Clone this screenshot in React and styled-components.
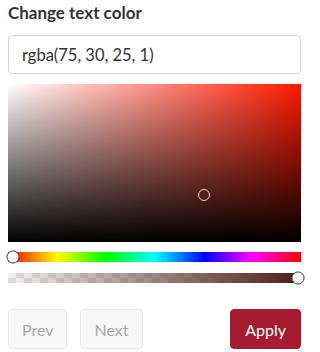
import styled, { createGlobalStyle } from 'styled-components';

const GlobalStyle = createGlobalStyle`
  body {
    margin: 0;
    background: #fff;
    font-family: Lato, "Liberation Sans", sans-serif;
  }
`;

const Panel = styled.div`
  width: 309px;
  box-sizing: border-box;
  padding: 3px 8px 0 8px;
  display: flex;
  flex-direction: column;
`;

const Title = styled.h3`
  margin: 0;
  font-size: 17px;
  line-height: 20px;
  font-weight: 700;
  color: #333;
`;

const ColorInput = styled.input`
  margin-top: 12px;
  height: 39px;
  box-sizing: border-box;
  border: 1px solid #d6d6d6;
  border-radius: 4px;
  padding: 0 13px;
  font-family: Lato, "Liberation Sans", sans-serif;
  font-size: 16.5px;
  color: #333;
  outline: none;
`;

const SatArea = styled.div`
  position: relative;
  margin-top: 10px;
  height: 158px;
  background:
    linear-gradient(to top, #000, rgba(0, 0, 0, 0)),
    linear-gradient(to right, #fff, rgba(255, 255, 255, 0)),
    ${p => p.$hue};
`;

const SatPointer = styled.div`
  position: absolute;
  width: 10px;
  height: 10px;
  border: 1.5px solid #f3d6cc;
  border-radius: 50%;
  transform: translate(-50%, -50%);
`;

const Slider = styled.div`
  position: relative;
  height: 10px;
  margin-top: ${p => p.$gap}px;
`;

const HueTrack = styled.div`
  height: 100%;
  background: linear-gradient(to right, #f00 0%, #ff0 17%, #0f0 33%, #0ff 50%, #00f 67%, #f0f 83%, #f00 100%);
`;

const AlphaTrack = styled.div`
  height: 100%;
  background:
    linear-gradient(to right, rgba(75, 30, 25, 0), rgba(75, 30, 25, 1)),
    repeating-conic-gradient(#dcdcdc 0% 25%, #f2f2f2 0% 50%) 0 0 / 16px 10px;
`;

const Thumb = styled.div`
  position: absolute;
  top: 50%;
  width: 11px;
  height: 11px;
  border-radius: 50%;
  background: #fff;
  border: 1px solid #555;
  box-shadow: 0 0 1px rgba(0, 0, 0, 0.4);
  transform: translate(-50%, -50%);
`;

const Actions = styled.div`
  display: flex;
  align-items: center;
  gap: 13px;
  margin-top: 26px;
`;

const Button = styled.button`
  height: 40px;
  padding: 0 ${p => (p.$primary ? 14 : 13)}px;
  border-radius: 4px;
  font-family: Lato, "Liberation Sans", sans-serif;
  font-size: 16px;
  border: 1px solid ${p => (p.$primary ? '#a51c30' : '#e8e8e8')};
  background: ${p => (p.$primary ? '#a51c30' : '#f8f8f8')};
  color: ${p => (p.$primary ? '#fff' : '#a8a8a8')};
  margin-left: ${p => (p.$push ? 'auto' : '0')};
  cursor: pointer;
`;

export default function App() {
  const hue = 6;
  return (
    <Panel>
      <GlobalStyle />
      <Title>Change text color</Title>
      <ColorInput defaultValue="rgba(75, 30, 25, 1)" />
      <SatArea $hue={`hsl(${hue}, 100%, 50%)`}>
        <SatPointer style={{ left: '67%', top: '70%' }} />
      </SatArea>
      <Slider $gap={10}>
        <HueTrack />
        <Thumb style={{ left: `${(hue / 360) * 100}%` }} />
      </Slider>
      <Slider $gap={11}>
        <AlphaTrack />
        <Thumb style={{ left: '99%' }} />
      </Slider>
      <Actions>
        <Button disabled>Prev</Button>
        <Button disabled>Next</Button>
        <Button $primary $push>Apply</Button>
      </Actions>
    </Panel>
  );
}
